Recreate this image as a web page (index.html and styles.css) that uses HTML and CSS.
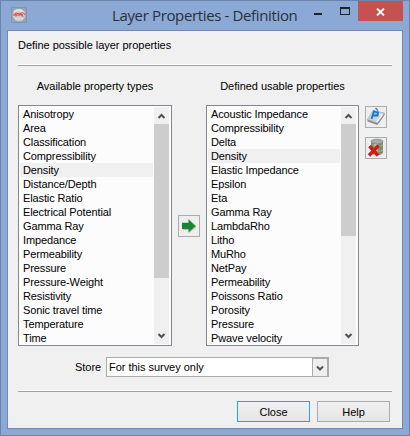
FILE: index.html
```
<!DOCTYPE html>
<html lang="en">
<head>
<meta charset="utf-8">
<title>Layer Properties - Definition</title>
<link rel="stylesheet" href="styles.css">
</head>
<body>
<div class="window">
  <header class="titlebar">
    <svg class="app-icon" width="16" height="16" viewBox="0 0 16 16">
      <rect x=".5" y=".5" width="15" height="15" fill="#91a4c2" stroke="#8194b1"/>
      <circle cx="8" cy="8" r="6.8" fill="#c9cccf" stroke="#9da3ab"/>
      <path d="M3 4.5Q8 1.5 13 5" fill="none" stroke="#e7e5e2" stroke-width="1.5"/>
      <path d="M2 8.5L5 6L8 7L12 5.5L14 8M5 6.5V9.5M8 7L11 7.5L12 10M3 8H12" fill="none" stroke="#e2484b" stroke-width="1"/>
      <path d="M4 11.5H12" stroke="#e0ddd8" stroke-width="1.5"/>
    </svg>
    <h1 class="title">Layer Properties - Definition</h1>
    <div class="controls">
      <span class="minimize"></span>
      <span class="maximize"></span>
      <span class="close-box"><svg width="9" height="8" viewBox="0 0 9 8"><path d="M1 .5L8 7.5M8 .5L1 7.5" stroke="#fff" stroke-width="1.8"/></svg></span>
    </div>
  </header>
  <main class="client">
    <p class="intro">Define possible layer properties</p>
    <div class="rule"></div>
    <div class="columns">
      <section class="available">
        <h2 class="heading">Available property types</h2>
        <div class="listbox">
          <ul class="items">
            <li>Anisotropy</li><li>Area</li><li>Classification</li><li>Compressibility</li><li class="current">Density</li><li>Distance/Depth</li><li>Elastic Ratio</li><li>Electrical Potential</li><li>Gamma Ray</li><li>Impedance</li><li>Permeability</li><li>Pressure</li><li>Pressure-Weight</li><li>Resistivity</li><li>Sonic travel time</li><li>Temperature</li><li>Time</li>
          </ul>
          <div class="scrollbar">
            <svg class="chevron" width="15" height="17" viewBox="0 0 15 17"><path d="M4.5 11L7.5 8L10.5 11" /></svg>
            <div class="thumb long"></div>
            <svg class="chevron bottom" width="15" height="17" viewBox="0 0 15 17"><path d="M4.5 7L7.5 10L10.5 7" /></svg>
          </div>
        </div>
      </section>
      <button class="icon-button move" aria-label="Add">
        <svg width="20" height="20" viewBox="0 0 20 20">
          <path d="M4 7.8H10V4.5L17.5 11L10 17V14H4Z" fill="#b9aaa2" opacity=".8"/>
          <path d="M3 6.8H9.5V3.5L16.5 10L9.5 16V13H3Z" fill="#138535"/>
          <path d="M9.5 3.5L16.5 10L9.5 16" fill="none" stroke="#4b9b31" stroke-width=".8"/>
        </svg>
      </button>
      <section class="defined">
        <h2 class="heading">Defined usable properties</h2>
        <div class="listbox">
          <ul class="items">
            <li>Acoustic Impedance</li><li>Compressibility</li><li>Delta</li><li class="current">Density</li><li>Elastic Impedance</li><li>Epsilon</li><li>Eta</li><li>Gamma Ray</li><li>LambdaRho</li><li>Litho</li><li>MuRho</li><li>NetPay</li><li>Permeability</li><li>Poissons Ratio</li><li>Porosity</li><li>Pressure</li><li>Pwave velocity</li>
          </ul>
          <div class="scrollbar">
            <svg class="chevron" width="15" height="17" viewBox="0 0 15 17"><path d="M4.5 11L7.5 8L10.5 11" /></svg>
            <div class="thumb short"></div>
            <svg class="chevron bottom" width="15" height="17" viewBox="0 0 15 17"><path d="M4.5 7L7.5 10L10.5 7" /></svg>
          </div>
        </div>
      </section>
      <div class="tools">
        <button class="icon-button" aria-label="Edit">
          <svg width="20" height="20" viewBox="0 0 20 20">
            <path d="M1.5 12.5L11.5 16V18L1.5 14.5Z" fill="#85898e"/>
            <path d="M11.5 16L18.5 6V8L11.5 18Z" fill="#74797f"/>
            <path d="M7 3.5L18.5 6L11.5 16L1.5 12.5Z" fill="#cfd2d6" stroke="#a3a7ac" stroke-width=".7"/>
            <path d="M13 7L16 8L11 14.5" fill="none" stroke="#f4f4f4" stroke-width="1.3"/>
            <path d="M5 12L7 4L12 5L13 8L8 10" fill="#8fc3f1"/>
            <path d="M5.5 12L8.3 3.5M8 4.5L12 5.5L11.5 8.5L7.5 8.5" fill="none" stroke="#1777d2" stroke-width="1.8"/>
            <path d="M9.5 1L12 3.5" stroke="#3b8bcc" stroke-width="1.5"/>
          </svg>
        </button>
        <button class="icon-button" aria-label="Remove">
          <svg width="20" height="20" viewBox="0 0 20 20">
            <path d="M5 3V15Q11 20 17 15V3Z" fill="#85887f"/>
            <path d="M8 5V17L12 17V5Z" fill="#c2c5bd"/>
            <ellipse cx="11" cy="3.5" rx="6" ry="2.3" fill="#a7aaa6" stroke="#777b76" stroke-width=".6"/>
            <path d="M5 7Q11 10 17 7M10 13.5Q15 13.5 17 12" fill="none" stroke="#86bd4b" stroke-width="1.3"/>
            <path d="M3.5 8L12 17.5M12.5 7.5L3 17.5" stroke="#cd1c20" stroke-width="3.4"/>
          </svg>
        </button>
      </div>
    </div>
    <div class="store">
      <span class="store-label">Store</span>
      <div class="select">
        <span class="select-value">For this survey only</span>
        <span class="select-arrow"><svg class="chevron" width="14" height="17" viewBox="0 0 14 17"><path d="M4 7.5L7 10.5L10 7.5"/></svg></span>
      </div>
    </div>
    <div class="rule"></div>
    <footer class="actions">
      <button class="button default">Close</button>
      <button class="button">Help</button>
    </footer>
  </main>
</div>
</body>
</html>
```
FILE: styles.css
```
* { box-sizing: border-box; }
body { margin: 0; font: 11px/14px "Liberation Sans", Arial, sans-serif; color: #000; letter-spacing: -.03px; }
h1, h2, p, ul { margin: 0; padding: 0; font-weight: normal; font-size: inherit; }
svg { display: block; }
button { font: inherit; letter-spacing: inherit; color: inherit; padding: 0; }
.window { width: 410px; height: 436px; background: #8ca8d4; border: 1px solid #6c84ab; padding: 0 6px 6px; }
.titlebar { height: 29px; display: flex; position: relative; }
.app-icon { margin: 6px 0 0 4px; }
.title { margin: 3px 0 0 85px; font: 15px/22px "Open Sans", sans-serif; letter-spacing: -.36px; white-space: nowrap; color: #29303d; }
.controls { position: absolute; right: 0; top: 0; display: flex; }
.minimize { width: 8px; height: 2px; background: #1c222c; margin: 12px 18px 0 0; }
.maximize { width: 10px; height: 8px; border: 1px solid #1c222c; border-top-width: 2px; margin: 6px 8px 0 0; }
.close-box { width: 45px; height: 20px; background: #c75050; display: flex; align-items: center; justify-content: center; padding-top: 2px; }
.client { width: 396px; height: 399px; border: 1px solid #7089b3; background: #f0f0f0; padding: 7px 10px 0; }
.intro { height: 26px; }
.rule { height: 2px; width: 374px; background: #a0a0a0; border-top: 1px solid #fff; }
.columns { display: flex; height: 280px; padding-top: 13px; }
.heading { height: 26px; text-align: center; }
.available { width: 154px; }
.defined { width: 153px; }
.listbox { height: 241px; border: 1px solid #828790; background: #fcfcfc; padding: 1px; display: flex; justify-content: space-between; }
.items { list-style: none; flex: 1; margin-right: 1px; height: 238px; white-space: nowrap; letter-spacing: -.12px; }
.items li { height: 14px; padding-left: 3px; }
.current { background: #f0f0f0; }
.scrollbar { width: 15px; margin-right: 1px; height: 237px; background: #f0f0f0; display: flex; flex-direction: column; }
.thumb { background: #cdcdcd; }
.long { height: 154px; }
.short { height: 112px; }
.bottom { margin-top: auto; }
.chevron { fill: none; stroke: #505050; stroke-width: 2; }
.icon-button { width: 22px; height: 22px; border: 1px solid #acacac; background: #eee; display: block; }
.move { margin: 136px 6px 0; }
.tools { margin: 27px 0 0 6px; display: grid; gap: 9px; align-content: start; }
.store { display: flex; height: 44px; padding: 11px 0 0 57px; }
.store-label { width: 31px; line-height: 20px; }
.select { width: 223px; height: 20px; border: 1px solid #acacac; background: #fff; display: flex; justify-content: space-between; }
.select-value { padding-left: 2px; line-height: 18px; }
.select-arrow { width: 16px; border: 1px solid #acacac; border-bottom: 0; background: #eee; }
.actions { display: flex; gap: 7px; justify-content: flex-end; padding: 9px 2px 0 0; }
.button { width: 73px; height: 21px; border: 1px solid #acacac; background: linear-gradient(#f0f0f0, #e5e5e5); }
.default { border-color: #3399ff; }
```
